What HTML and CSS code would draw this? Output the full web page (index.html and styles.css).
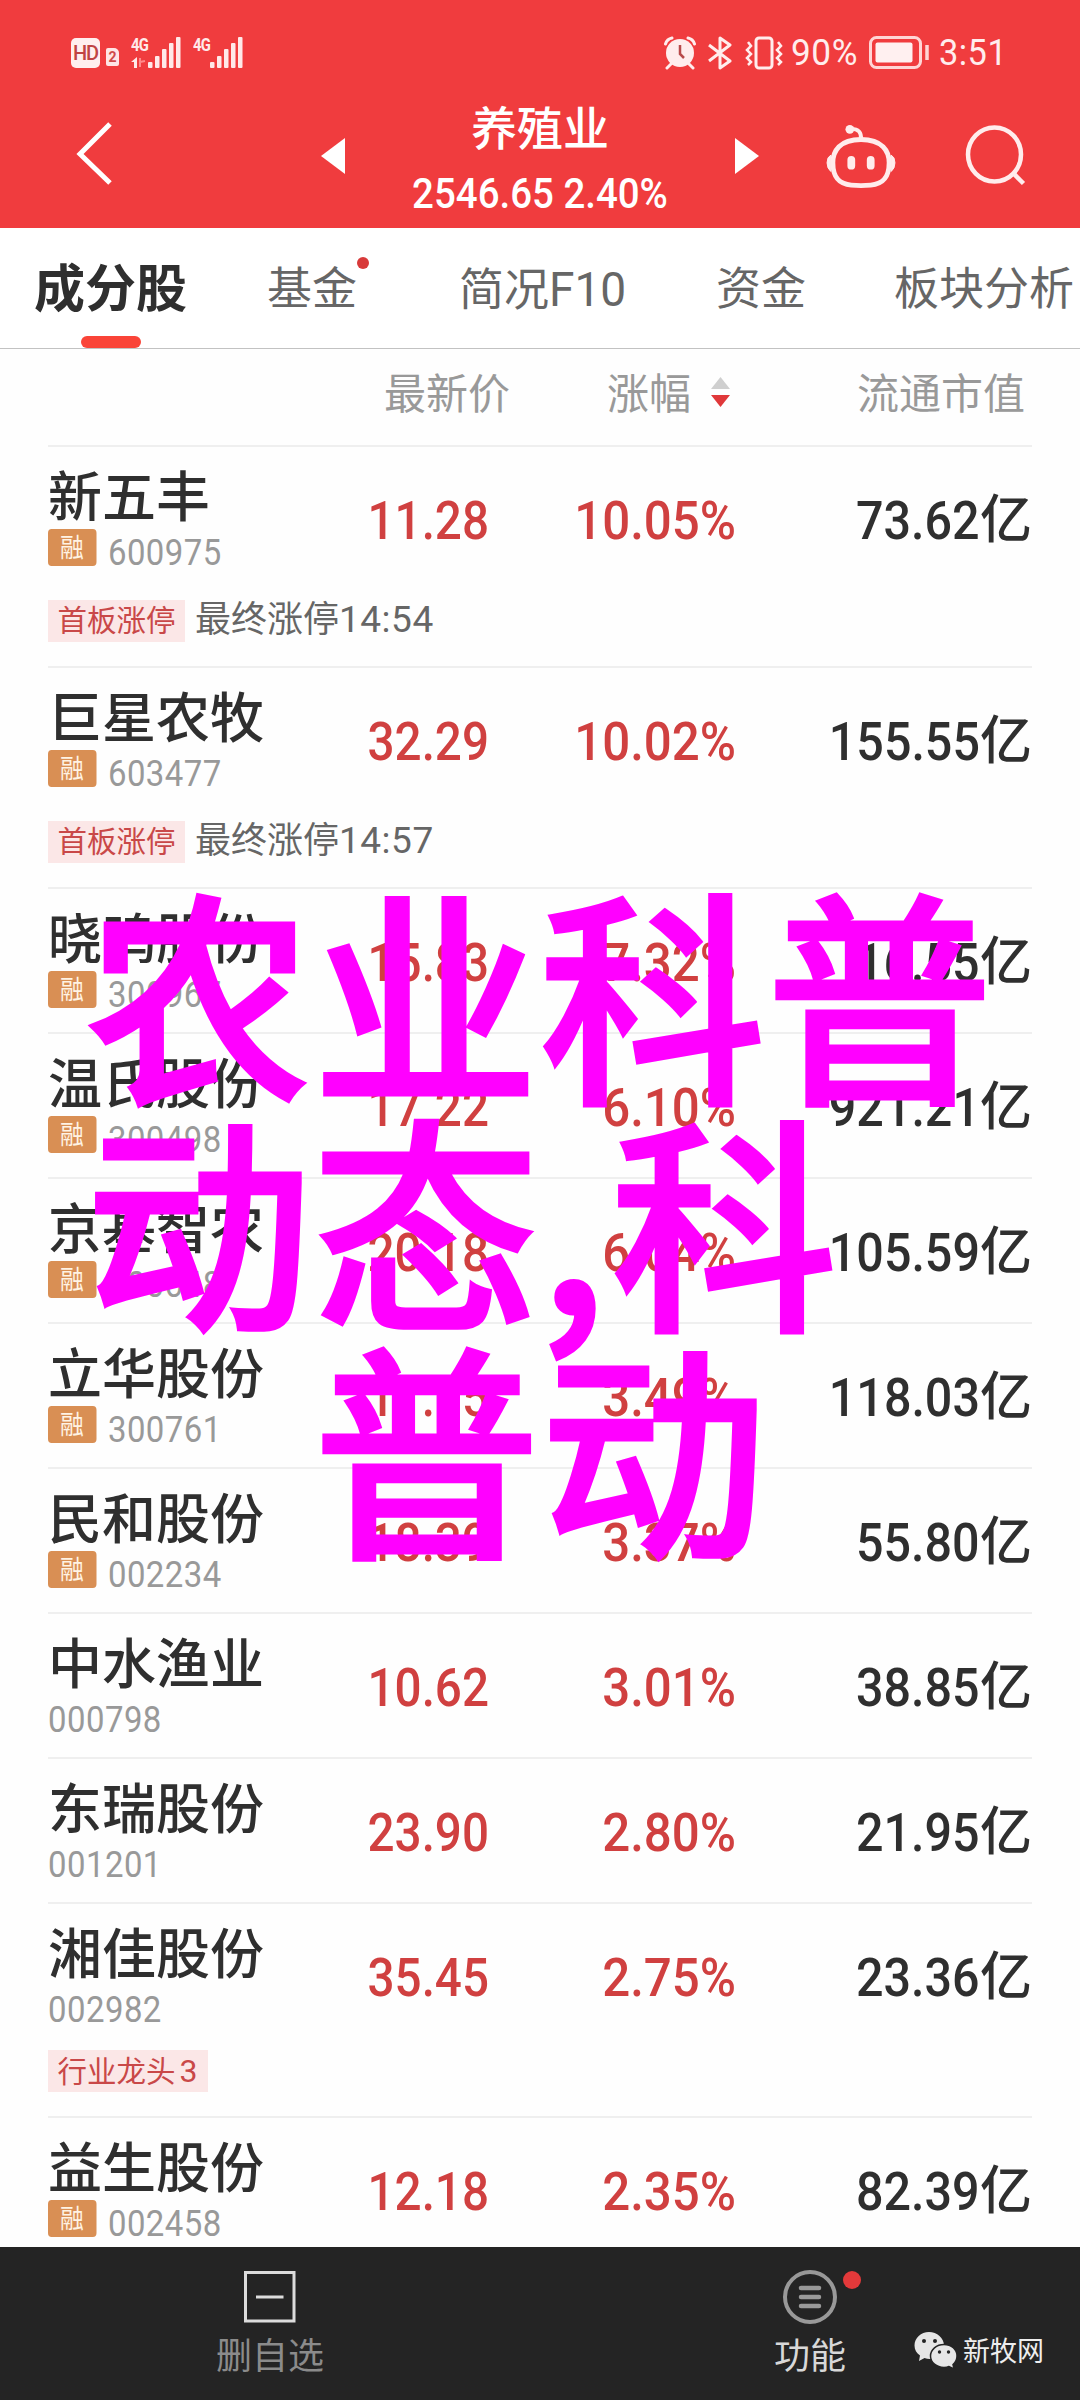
FILE: index.html
```html
<!DOCTYPE html>
<html lang="zh-CN">
<head>
<meta charset="utf-8">
<title>养殖业</title>
<link rel="stylesheet" href="styles.css">
</head>
<body>
<div class="screen">
  <header class="top">
    <div class="status">
      <div class="status-left">
        <span class="hd">HD</span>
        <span class="sim">2</span>
        <span class="net net-a"><b>4G</b><svg width="16" height="11" viewBox="0 0 16 11"><path d="M0 5 6 0V11H3V5Z" fill="#ffe9e9"/><path d="M9 1V10M9 5l5-1" stroke="#ff8a8a" stroke-width="2" fill="none"/></svg></span>
        <svg class="bars" width="33" height="33" viewBox="0 0 33 33"><g fill="#ffe9e9"><rect x="0" y="26" width="4.5" height="6" rx="1"/><rect x="7" y="20" width="4.5" height="12" rx="1"/><rect x="14" y="13" width="4.5" height="19" rx="1"/><rect x="21" y="7" width="4.5" height="25" rx="1"/><rect x="28" y="1" width="4.5" height="31" rx="1"/></g></svg>
        <span class="net net-b"><b>4G</b></span>
        <svg class="bars" width="33" height="33" viewBox="0 0 33 33"><g fill="#ffe9e9"><rect x="0" y="26" width="4.5" height="6" rx="1"/><rect x="7" y="20" width="4.5" height="12" rx="1"/><rect x="14" y="13" width="4.5" height="19" rx="1"/><rect x="21" y="7" width="4.5" height="25" rx="1"/><rect x="28" y="1" width="4.5" height="31" rx="1"/></g></svg>
      </div>
      <div class="status-right">
        <svg width="32" height="34" viewBox="0 0 32 34"><circle cx="16" cy="17" r="14" fill="#ffeded"/><path d="M1.500 8Q3 3 8 2M24 2Q29 3 30.500 8M7 28 3 32M25 28 29 32" stroke="#ffeded" stroke-width="3" fill="none" stroke-linecap="round"/><path d="M16 9V18L20 22" stroke="#b84a4a" stroke-width="2.500" fill="none"/></svg>
        <svg class="bt" width="24" height="34" viewBox="0 0 24 34"><path d="M1 9 22 25 12 32V2L22 9 1 25" stroke="#ffeded" stroke-width="3" fill="none" stroke-linejoin="round"/></svg>
        <svg class="vib" width="38" height="34" viewBox="0 0 38 34"><rect x="11" y="2" width="16" height="30" rx="3" fill="none" stroke="#ffeded" stroke-width="3"/><path d="M3 6 6 10 2 14 6 18 2 22 6 26 3 29M33 6 36 10 32 14 36 18 32 22 36 26 33 29" stroke="#ffeded" stroke-width="2.500" fill="none"/></svg>
        <span class="pct">90%</span>
        <svg class="bat" width="61" height="33" viewBox="0 0 61 33"><rect x="1.500" y="1.500" width="50" height="30" rx="6" fill="none" stroke="#ffd5d5" stroke-width="3"/><rect x="6.500" y="6.500" width="37" height="20" rx="2" fill="#fff0f0"/><path d="M58 9V24" stroke="#ffd5d5" stroke-width="3.500"/></svg>
        <span class="time">3:51</span>
      </div>
    </div>
    <div class="nav">
      <svg class="back" width="40" height="68" viewBox="0 0 40 68"><path d="M35 4 5 34 35 63" fill="none" stroke="#fff" stroke-width="5"/></svg>
      <svg class="prev" width="24" height="36" viewBox="0 0 24 36"><path d="M24 0V36L0 18Z" fill="#fff"/></svg>
      <div class="title"><h1>养殖业</h1><p>2546.65 2.40%</p></div>
      <svg class="next" width="24" height="36" viewBox="0 0 24 36"><path d="M0 0V36L24 18Z" fill="#fff"/></svg>
      <svg class="robot" width="70" height="66" viewBox="0 0 72 68"><path d="M36 17C58 17 65 29 65 41C65 58 57 63 46 64Q36 65 26 64C15 63 7 58 7 41C7 29 14 17 36 17Z" fill="none" stroke="#ffecec" stroke-width="5"/><path d="M36 17Q37 6 26 6" fill="none" stroke="#ffecec" stroke-width="4"/><circle cx="24.500" cy="6.500" r="4.500" fill="#ffecec"/><path d="M5 33Q1 35 1 41T5 50ZM67 33Q71 35 71 41T67 50Z" fill="#ffecec" stroke="#ffecec" stroke-width="1"/><rect x="22" y="34" width="8" height="14" rx="4" fill="#ffecec"/><rect x="42" y="34" width="8" height="14" rx="4" fill="#ffecec"/></svg>
      <svg class="search" width="62" height="62" viewBox="0 0 62 62"><ellipse cx="29.500" cy="30.500" rx="26.500" ry="27" fill="none" stroke="#ffecec" stroke-width="4.500"/><path d="M48 49 58.500 59.500" stroke="#ffecec" stroke-width="4.500"/></svg>
    </div>
  </header>

  <nav class="tabs">
    <span class="tab tab-on">成分股</span>
    <span class="tab tab-fund">基金<i class="dot"></i></span>
    <span class="tab tab-brief">简况<em>F10</em></span>
    <span class="tab tab-money">资金</span>
    <span class="tab tab-block">板块分析</span>
  </nav>

  <main class="list">
    <div class="cols head">
      <span></span><span class="h-price">最新价</span>
      <span class="h-rise">涨幅<svg width="19" height="31" viewBox="0 0 19 31"><path d="M9.500 0 19 12H0Z" fill="#cfcfcf"/><path d="M0 18H19L9.500 30Z" fill="#e0383a"/></svg></span>
      <span class="h-cap">流通市值</span>
    </div>

    <section class="row"><div class="cols"><div class="stock"><h2>新五丰</h2><p><i class="rong">融</i>600975</p></div><b class="price">11.28</b><b class="rise">10.05%</b><b class="cap"><span>73.62</span><u>亿</u></b></div>
      <div class="note"><span class="tag">首板涨停</span><span>最终涨停<em>14:54</em></span></div></section>
    <section class="row"><div class="cols"><div class="stock"><h2>巨星农牧</h2><p><i class="rong">融</i>603477</p></div><b class="price">32.29</b><b class="rise">10.02%</b><b class="cap"><span>155.55</span><u>亿</u></b></div>
      <div class="note"><span class="tag">首板涨停</span><span>最终涨停<em>14:57</em></span></div></section>
    <section class="row"><div class="cols"><div class="stock"><h2>晓鸣股份</h2><p><i class="rong">融</i>300967</p></div><b class="price">15.83</b><b class="rise">7.32%</b><b class="cap"><span>16.55</span><u>亿</u></b></div></section>
    <section class="row"><div class="cols"><div class="stock"><h2>温氏股份</h2><p><i class="rong">融</i>300498</p></div><b class="price">17.22</b><b class="rise">6.10%</b><b class="cap"><span>921.21</span><u>亿</u></b></div></section>
    <section class="row"><div class="cols"><div class="stock"><h2>京基智农</h2><p><i class="rong">融</i>000048</p></div><b class="price">20.18</b><b class="rise">6.04%</b><b class="cap"><span>105.59</span><u>亿</u></b></div></section>
    <section class="row"><div class="cols"><div class="stock"><h2>立华股份</h2><p><i class="rong">融</i>300761</p></div><b class="price">17.15</b><b class="rise">3.49%</b><b class="cap"><span>118.03</span><u>亿</u></b></div></section>
    <section class="row"><div class="cols"><div class="stock"><h2>民和股份</h2><p><i class="rong">融</i>002234</p></div><b class="price">18.39</b><b class="rise">3.37%</b><b class="cap"><span>55.80</span><u>亿</u></b></div></section>
    <section class="row"><div class="cols"><div class="stock"><h2>中水渔业</h2><p>000798</p></div><b class="price">10.62</b><b class="rise">3.01%</b><b class="cap"><span>38.85</span><u>亿</u></b></div></section>
    <section class="row"><div class="cols"><div class="stock"><h2>东瑞股份</h2><p>001201</p></div><b class="price">23.90</b><b class="rise">2.80%</b><b class="cap"><span>21.95</span><u>亿</u></b></div></section>
    <section class="row"><div class="cols"><div class="stock"><h2>湘佳股份</h2><p>002982</p></div><b class="price">35.45</b><b class="rise">2.75%</b><b class="cap"><span>23.36</span><u>亿</u></b></div>
      <div class="note note-short"><span class="tag">行业龙头<em>3</em></span></div></section>
    <section class="row"><div class="cols"><div class="stock"><h2>益生股份</h2><p><i class="rong">融</i>002458</p></div><b class="price">12.18</b><b class="rise">2.35%</b><b class="cap"><span>82.39</span><u>亿</u></b></div></section>
  </main>

  <footer class="bottom">
    <div class="action del"><svg width="52" height="52" viewBox="0 0 52 52"><rect x="1.500" y="1.500" width="48.500" height="48.500" fill="none" stroke="#dcdcdc" stroke-width="3"/><path d="M12 26H39.500" stroke="#dcdcdc" stroke-width="3"/></svg><span>删自选</span></div>
    <div class="action more"><svg width="56" height="56" viewBox="0 0 56 56"><circle cx="28" cy="28" r="25" fill="none" stroke="#999" stroke-width="4"/><path d="M19 19H37M19 28H37M19 37H37" stroke="#999" stroke-width="4.500" stroke-linecap="round"/></svg><span>功能</span><i class="dot dot-big"></i></div>
    <div class="source"><svg width="43" height="38" viewBox="0 0 43 38"><path d="M15 1C7 1 .5 7 .5 14.500C.5 19 2.500 22 6 24.500L5 30 10.500 27Q13 28 16 28C24 28 30 22 30 14.500S23 1 15 1Z" fill="#e6e6e6"/><path d="M30 13.500C22.500 13.500 16.500 18.500 16.500 25S22.500 36.500 30 36.500Q33 36.500 35 35.500L40 38 39 33.500C41.500 31.500 43 28.500 43 25C43 18.500 37.500 13.500 30 13.500Z" fill="#e6e6e6" stroke="#242424" stroke-width="1.500"/><g fill="#242424"><circle cx="10" cy="10" r="2"/><circle cx="21" cy="10" r="2"/><circle cx="25.500" cy="21" r="1.700"/><circle cx="34.500" cy="21" r="1.700"/></g></svg><span>新牧网</span></div>
  </footer>

  <div class="caption"><div>农业科普</div><div>动态<em>,</em>科</div><div class="caption-last">普动</div></div>
</div>
</body>
</html>
```
FILE: styles.css
```css
* { box-sizing: border-box; margin: 0; padding: 0; }
body { background: #fefefe; }
i, em { font-style: normal; }
u { text-decoration: none; }
svg { display: block; flex: none; }

.screen {
  position: relative;
  width: 1080px;
  height: 2400px;
  overflow: hidden;
  display: flex;
  flex-direction: column;
  background: #fefefe;
  color: #2f2f2f;
  font-family: Roboto, "Noto Sans CJK SC", sans-serif;
}

/* header */
.top { height: 228px; flex: none; background: #f03c3e; color: #fff; }
.status { height: 86px; padding: 36px 75px 0 71px; display: flex; justify-content: space-between; }
.status-left, .status-right { display: flex; align-items: flex-start; }
.status-left { color: #ffe9e9; }
.hd { width: 29px; height: 30px; margin-top: 2px; border-radius: 5px; background: #ffefef; color: #c04444; font: 500 20px/30px Roboto, sans-serif; letter-spacing: -1px; text-align: center; }
.sim { width: 13px; height: 18px; margin: 12px 0 0 6px; border-radius: 2px; border-top-right-radius: 5px; background: #ffe5e5; color: #d04a4a; font: 700 14px/18px Roboto, sans-serif; text-align: center; }
.net { width: 17px; display: flex; flex-direction: column; gap: 4px; }
.net b { font: 700 19px/17px Roboto, sans-serif; letter-spacing: -1px; transform: scaleX(.78); transform-origin: left; }
.net-a { margin-left: 12px; }
.net-b { margin-left: 12px; }
.status-right { font-size: 37px; line-height: 33px; color: #ffeded; }
.bt { margin-left: 12px; }
.vib { margin-left: 13px; }
.pct, .time { white-space: nowrap; transform-origin: left; }
.pct { margin-left: 8px; width: 69px; letter-spacing: .6px; transform: scaleX(.95); }
.bat { margin-left: 9px; }
.time { margin-left: 9px; width: 66px; letter-spacing: .5px; transform: scaleX(.93); }

.nav { height: 142px; display: flex; align-items: flex-start; }
.back { margin: 34px 0 0 75px; }
.prev { margin: 52px 0 0 206px; }
.title { width: 390px; text-align: center; white-space: nowrap; }
.title h1 { margin-top: 20px; font-size: 46px; line-height: 46px; font-weight: 500; }
.title p { margin-top: 21px; font-size: 42px; line-height: 42px; font-weight: 500; transform: scaleX(.915); }
.next { margin-top: 52px; }
.robot { margin: 37px 0 0 67px; }
.search { margin: 38px 0 0 69px; }

/* tabs */
.tabs { height: 121px; flex: none; display: flex; border-bottom: 1px solid #c2c2c2; color: #666; font-size: 45px; line-height: 124px; white-space: nowrap; background: #fff; }
.tab { position: relative; flex: none; height: 120px; }
.tab-on { width: 153px; margin-left: 34px; color: #2f2f2f; font-size: 51px; font-weight: 700; }
.tab-on::after { content: ""; position: absolute; left: 47px; bottom: 0; width: 60px; height: 12px; border-radius: 6px; background: #fa4438; }
.tab-fund { margin-left: 80px; width: 90px; }
.tab-brief { margin-left: 102px; width: 168px; }
.tab-brief em { display: inline-block; font-size: 48px; transform: scaleX(.96); transform-origin: left; }
.tab-money { margin-left: 89px; width: 90px; }
.tab-block { margin-left: 88px; }
.dot { position: absolute; left: 90px; top: 29px; width: 12px; height: 12px; border-radius: 50%; background: #d83a3a; }

/* list */
.list { height: 1898px; flex: none; overflow: hidden; padding: 0 48px; }
.cols { height: 144px; display: grid; grid-template-columns: 274px 166px 247px 297px; white-space: nowrap; }
.head { height: 96px; color: #999; font-size: 42px; line-height: 92px; }
.h-price { padding-left: 62px; }
.h-rise { display: flex; padding-left: 119px; }
.h-rise svg { margin: 28px 0 0 20px; }
.h-cap { padding-left: 122px; }
.row { border-top: 2px solid #efefef; }
.row .cols { height: 143px; }
.stock h2 { margin-top: 25px; font-size: 54px; line-height: 54px; font-weight: 500; }
.stock p { display: flex; align-items: center; height: 37px; margin-top: 3px; color: #999; font-size: 36px; line-height: 48px; letter-spacing: .5px; padding-top: 10px; transform: scaleX(.915); transform-origin: left; }
.rong { width: 52.500px; height: 37px; margin: -10px 13px 0 0; border-radius: 4px; background: #d98f54; color: #fff3e4; font-size: 26px; line-height: 38px; text-align: center; letter-spacing: 0; }
.price, .rise, .cap { margin-top: 44px; font-size: 53.500px; line-height: 60px; font-weight: 500; text-align: right; color: #d04040; }
.price, .rise { margin-right: -1px; transform: scaleX(.92); transform-origin: right; }
.price { transform: scaleX(.89); }
.cap { display: flex; justify-content: flex-end; color: #2f2f2f; }
.cap span { transform: scaleX(.905); transform-origin: right; }
.cap u { font-size: 52px; line-height: 60px; }
.note { height: 76px; display: flex; align-items: flex-start; gap: 10px; padding-top: 10px; color: #666; font-size: 36px; line-height: 40px; }
.note > span { white-space: nowrap; }
.note em { font-size: 37px; letter-spacing: .5px; }
.note .tag { height: 42px; padding: 0 9.500px; background: #fbe7e7; color: #c94848; font-size: 29.500px; line-height: 43px; }
.note .tag em { font-size: 32px; margin-left: 4px; }
.note-short { height: 69px; padding-top: 3px; }

/* bottom bar */
.bottom { height: 153px; flex: none; display: grid; grid-template-columns: 540px 374px 166px; background: #242424; }
.action { position: relative; display: flex; flex-direction: column; align-items: center; font-size: 36px; line-height: 36px; }
.del { color: #8b8b8b; }
.del svg { margin-top: 24px; }
.del span { margin-top: 16px; }
.more { width: 540px; color: #d8d8d8; }
.more svg { margin-top: 22px; }
.more span { margin-top: 14px; }
.dot-big { left: 303px; top: 24px; width: 18px; height: 18px; background: #e3393a; }
.source { display: flex; gap: 6px; padding-top: 84px; color: #eee; font-size: 27px; line-height: 42px; z-index: 1; }

/* caption laid over the list */
.caption { position: absolute; left: 85px; top: 875px; color: #f0f; font: 500 227px/227px "Noto Sans CJK SC", sans-serif; -webkit-text-stroke: 3px #f0f; white-space: nowrap; }
.caption em { letter-spacing: 4px; }
.caption-last { padding-left: 228px; }
```
